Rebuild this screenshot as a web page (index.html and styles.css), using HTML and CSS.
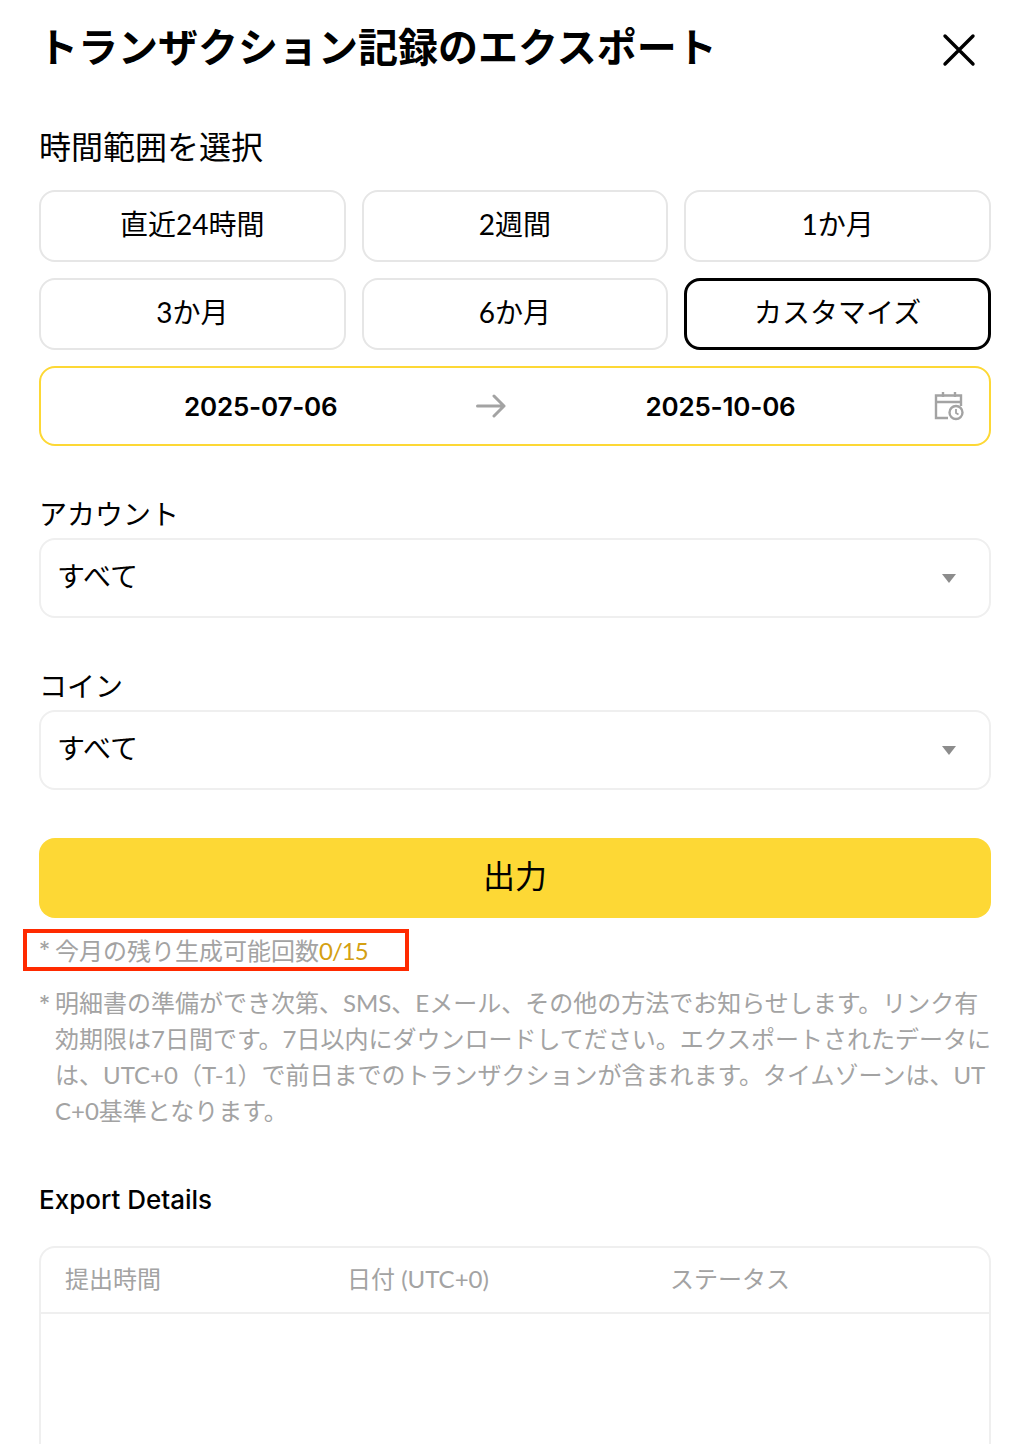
FILE: index.html
```html
<!DOCTYPE html>
<html lang="ja">
<head>
  <meta charset="UTF-8">
  <title>トランザクション記録のエクスポート</title>
  <link rel="stylesheet" href="styles.css">
</head>
<body>
  <div class="modal">
    <div class="modal-header">
      <h1>トランザクション記録のエクスポート</h1>
      <svg class="close-icon" width="34" height="34" viewBox="0 0 34 34">
        <path d="M3 3L31 31M31 3L3 31" fill="none" stroke="#000" stroke-width="3.4" stroke-linecap="round"/>
      </svg>
    </div>

    <div class="field-label range-label">時間範囲を選択</div>
    <div class="range-grid">
      <div class="range-btn">直近24時間</div>
      <div class="range-btn">2週間</div>
      <div class="range-btn">1か月</div>
      <div class="range-btn">3か月</div>
      <div class="range-btn">6か月</div>
      <div class="range-btn active">カスタマイズ</div>
    </div>

    <div class="date-range">
      <span class="date date-start">2025-07-06</span>
      <svg class="arrow-icon" width="30" height="24" viewBox="0 0 30 24">
        <path d="M1.500 12H28M18 2L28 12L18 22" fill="none" stroke="#a3a3a3" stroke-width="3" stroke-linecap="round" stroke-linejoin="round"/>
      </svg>
      <span class="date date-end">2025-10-06</span>
      <svg class="calendar-icon" width="30" height="30" viewBox="0 0 30 30">
        <path d="M9 1V6M21 1V6M2 11H27M14 27H2V4.500H27V15" fill="none" stroke="#a3a3a3" stroke-width="2.400"/>
        <circle cx="22" cy="21.500" r="6.500" fill="#fff" stroke="#a3a3a3" stroke-width="2.400"/>
        <path d="M22 18V22L24.500 23.500" fill="none" stroke="#a3a3a3" stroke-width="1.800"/>
      </svg>
    </div>

    <div class="field-label account-label">アカウント</div>
    <div class="select-box">
      <span>すべて</span>
      <span class="caret"></span>
    </div>

    <div class="field-label coin-label">コイン</div>
    <div class="select-box">
      <span>すべて</span>
      <span class="caret"></span>
    </div>

    <div class="submit-btn">出力</div>

    <div class="note-count">
      <span class="star">*</span><span>今月の残り生成可能回数<span class="count">0/15</span></span>
    </div>
    <div class="note">
      <span class="star">*</span>
      <p>明細書の準備ができ次第、SMS、Eメール、その他の方法でお知らせします。リンク有効期限は7日間です。7日以内にダウンロードしてださい。エクスポートされたデータには、UTC+0（T-1）で前日までのトランザクションが含まれます。タイムゾーンは、UTC+0基準となります。</p>
    </div>

    <h2>Export Details</h2>
    <div class="details-table">
      <div class="table-head">
        <span class="col-time">提出時間</span>
        <span class="col-date">日付 (UTC+0)</span>
        <span>ステータス</span>
      </div>
      <div class="table-body"></div>
    </div>
  </div>
</body>
</html>
```

FILE: styles.css
```css
body {
  margin: 0;
  height: 1444px;
  overflow: hidden;
  background: #fff;
  color: #000;
  font-family: Lato, "Noto Sans CJK JP", sans-serif;
}

.modal {
  padding: 0 27px 0 39px;
}

.modal-header {
  display: flex;
  justify-content: space-between;
  align-items: flex-start;
  height: 96px;
}

h1 {
  margin: 19px 0 0 -1px;
  font-size: 40px;
  line-height: 56px;
  font-weight: 700;
}

.close-icon {
  margin: 33px 15px 0 0;
}

.field-label {
  font-size: 32px;
  line-height: 44px;
}

.range-label {
  margin-top: 29px;
}

.account-label,
.coin-label {
  margin-top: 48px;
  margin-bottom: 4px;
  font-size: 28px;
  line-height: 40px;
}

.range-grid {
  display: grid;
  grid-template-columns: repeat(3, 1fr);
  gap: 16px;
  margin-top: 21px;
}

.range-btn {
  height: 72px;
  box-sizing: border-box;
  display: flex;
  align-items: center;
  justify-content: center;
  padding-bottom: 6px;
  border: 2px solid #e6e6e6;
  border-radius: 16px;
  font-size: 28px;
}

.range-btn.active {
  border: 3px solid #000;
}

.date-range {
  display: flex;
  align-items: center;
  height: 80px;
  box-sizing: border-box;
  margin-top: 16px;
  border: 2px solid #fdd835;
  border-radius: 16px;
  font-family: Inter, sans-serif;
  font-size: 26px;
  font-weight: 600;
  letter-spacing: -0.2px;
}

.date-start {
  margin-left: 143px;
}

.arrow-icon {
  margin-left: 138px;
}

.date-end {
  margin-left: 140px;
}

.calendar-icon {
  margin-left: auto;
  margin-right: 25px;
}

.select-box {
  display: flex;
  align-items: center;
  justify-content: space-between;
  height: 80px;
  box-sizing: border-box;
  padding: 0 33px 6px 18px;
  border: 2px solid #efefef;
  border-radius: 16px;
  font-size: 28px;
}

.select-box span:first-child {
  margin-left: -2px;
}

.caret {
  width: 0;
  height: 0;
  margin-top: 6px;
  border-left: 7px solid transparent;
  border-right: 7px solid transparent;
  border-top: 9px solid #8c8c8c;
}

.submit-btn {
  display: flex;
  align-items: center;
  justify-content: center;
  height: 80px;
  box-sizing: border-box;
  margin-top: 48px;
  padding-bottom: 9px;
  background: #fdd835;
  border-radius: 16px;
  font-size: 32px;
}

.star {
  width: 16px;
  flex-shrink: 0;
  font-family: Inter, sans-serif;
  font-size: 22px;
}

.note-count {
  display: flex;
  min-width: 386px;
  width: fit-content;
  box-sizing: border-box;
  height: 42px;
  align-items: center;
  margin: 11px 0 0 -16px;
  padding: 0 12px 2px;
  border: 4px solid #ff2a00;
  color: #a3a3a3;
  font-size: 24px;
}

.count {
  color: #d4a012;
  letter-spacing: -1px;
}

.note {
  display: flex;
  margin-top: 14px;
  color: #a3a3a3;
  font-size: 24px;
  line-height: 36px;
}

.note p {
  margin: 0;
  word-break: break-all;
}

h2 {
  margin: 53px 0 0;
  font-family: Inter, sans-serif;
  font-size: 26px;
  line-height: 36px;
  font-weight: 500;
}

.details-table {
  margin-top: 28px;
  border: 2px solid #efefef;
  border-bottom: none;
  border-radius: 16px 16px 0 0;
}

.table-head {
  display: flex;
  align-items: center;
  height: 66px;
  box-sizing: border-box;
  padding: 0 0 6px 24px;
  border-bottom: 2px solid #efefef;
  color: #a3a3a3;
  font-size: 24px;
}

.col-time {
  width: 282px;
}

.col-date {
  width: 323px;
}

.table-body {
  height: 130px;
}
```
